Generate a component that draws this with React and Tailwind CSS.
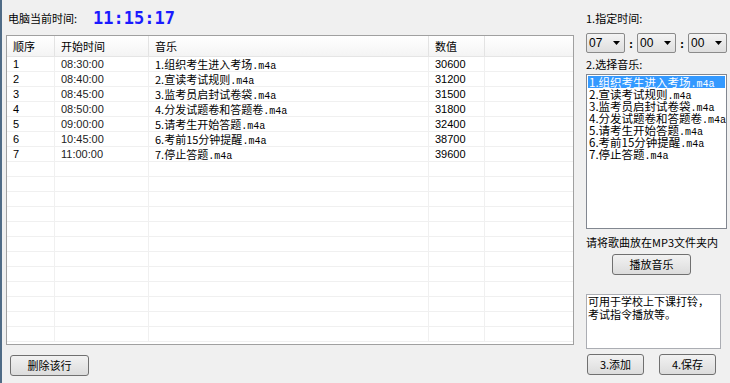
const rows = [
  ["1", "08:30:00", "1.组织考生进入考场", "30600"],
  ["2", "08:40:00", "2.宣读考试规则", "31200"],
  ["3", "08:45:00", "3.监考员启封试卷袋", "31500"],
  ["4", "08:50:00", "4.分发试题卷和答题卷", "31800"],
  ["5", "09:00:00", "5.请考生开始答题", "32400"],
  ["6", "10:45:00", "6.考前15分钟提醒", "38700"],
  ["7", "11:00:00", "7.停止答题", "39600"],
];

const cjk = "font-['Noto_Sans_CJK_SC','Noto_Sans',sans-serif]";
const ui = "font-['Liberation_Sans','Noto_Sans_CJK_SC',sans-serif]";

function WinButton({ children, className = "" }) {
  return (
    <button
      className={`flex items-center justify-center rounded-[3px] border border-[#707070] bg-gradient-to-b from-[#f2f2f2] to-[#dcdcdc] text-[11px] text-black ${cjk} ${className}`}
    >
      {children}
    </button>
  );
}

function Combo({ value }) {
  return (
    <div className="flex h-[20px] w-[39px] items-center justify-between rounded-[2px] border border-[#8a8a8a] bg-gradient-to-b from-[#f4f4f4] to-[#dedede] pl-[2px] pr-[4px]">
      <span className={`text-[12px] leading-none ${ui}`}>{value}</span>
      <svg width="7" height="4" viewBox="0 0 7 4">
        <path d="M0 0h7L3.5 4z" fill="#000" />
      </svg>
    </div>
  );
}

function Cell({ w, children, last }) {
  return (
    <div
      className={`h-full shrink-0 overflow-hidden whitespace-nowrap pl-[6px] ${last ? "" : "border-r border-[#f0f0f0]"}`}
      style={{ width: w }}
    >
      {children}
    </div>
  );
}

const widths = [48, 94, 280, 56, 88];

export default function App() {
  const empty = Array.from({ length: 12 });

  return (
    <div className="flex h-[383px] w-[730px] overflow-hidden border-l-2 border-[#4f6b86] bg-[#f0f0f0] text-black">
      <div className="flex w-[574px] flex-col">
        <div className="flex h-[35px] items-center pl-[6px] pt-[2px]">
          <span className={`text-[11px] ${cjk}`}>电脑当前时间:</span>
          <span className="ml-[16px] font-['DejaVu_Sans_Mono',monospace] text-[17px] font-bold text-[#1a1aff]">
            11:15:17
          </span>
        </div>

        <div className="ml-[4px] flex h-[310px] w-[568px] flex-col overflow-hidden border border-[#a0a0a0] bg-white">
          <div className={`flex h-[21px] shrink-0 items-center border-b border-[#e5e5e5] bg-gradient-to-b from-white to-[#f4f4f4] text-[11px] ${cjk}`}>
            {["顺序", "开始时间", "音乐", "数值", ""].map((h, i) => (
              <div key={i} className="flex h-full items-center" style={{ width: widths[i] }}>
                <div className={`flex h-full w-full items-center pl-[6px] ${i < 4 ? "border-r border-[#e3e3e3]" : ""}`}>
                  {h}
                </div>
              </div>
            ))}
          </div>
          {rows.map((r) => (
            <div key={r[0]} className="flex h-[15px] shrink-0 items-center border-b border-[#f0f0f0] text-[11px] leading-[14px]">
              <Cell w={widths[0]}>
                <span className={ui}>{r[0]}</span>
              </Cell>
              <Cell w={widths[1]}>
                <span className={`${ui} text-[#222]`}>{r[1]}</span>
              </Cell>
              <Cell w={widths[2]}>
                <span className={cjk}>{r[2]}</span>
                <span className="font-['Liberation_Mono',monospace] text-[10px]">.m4a</span>
              </Cell>
              <Cell w={widths[3]}>
                <span className={`${ui} text-[11px]`}>{r[3]}</span>
              </Cell>
              <Cell w={widths[4]} last />
            </div>
          ))}
          {empty.map((_, i) => (
            <div key={i} className="flex h-[15px] shrink-0 border-b border-[#f0f0f0]">
              {widths.map((w, j) => (
                <Cell key={j} w={w} last={j === 4} />
              ))}
            </div>
          ))}
        </div>

        <WinButton className="ml-[8px] mt-[10px] h-[21px] w-[79px]">删除该行</WinButton>
      </div>

      <div className={`ml-[10px] flex w-[142px] flex-col text-[11px] ${cjk}`}>
        <div className="mt-[10px] h-[16px] leading-[16px]">1.指定时间:</div>
        <div className="mt-[7px] flex items-center">
          <Combo value="07" />
          <span className="w-[12px] text-center font-bold">:</span>
          <Combo value="00" />
          <span className="w-[12px] text-center font-bold">:</span>
          <Combo value="00" />
        </div>
        <div className="mt-[3px] h-[16px] leading-[16px]">2.选择音乐:</div>
        <div className="mt-[2px] h-[155px] w-[141px] overflow-hidden border border-[#828790] bg-white p-[1px] text-[11.5px] leading-[12px]">
          {rows.map((r, i) => (
            <div
              key={r[0]}
              className={`h-[12px] whitespace-nowrap pl-[1px] ${i === 0 ? "bg-[#3399ff] text-white" : ""}`}
            >
              <span>{r[2]}</span>
              <span className="font-['Liberation_Mono',monospace] text-[10px]">.m4a</span>
            </div>
          ))}
        </div>
        <div className="mt-[5px] h-[16px] whitespace-nowrap leading-[16px]">请将歌曲放在MP3文件夹内</div>
        <WinButton className="ml-[26px] mt-[4px] h-[21px] w-[79px]">播放音乐</WinButton>
        <div className="mt-[19px] h-[55px] w-[135px] whitespace-nowrap border border-[#abadb3] bg-white px-[1px] text-[11px] leading-[13px]">
          可用于学校上下课打铃，
          <br />
          考试指令播放等。
        </div>
        <div className="mt-[5px] flex">
          <WinButton className="ml-[1px] h-[21px] w-[57px]">3.添加</WinButton>
          <WinButton className="ml-[15px] h-[21px] w-[57px]">4.保存</WinButton>
        </div>
      </div>
    </div>
  );
}
